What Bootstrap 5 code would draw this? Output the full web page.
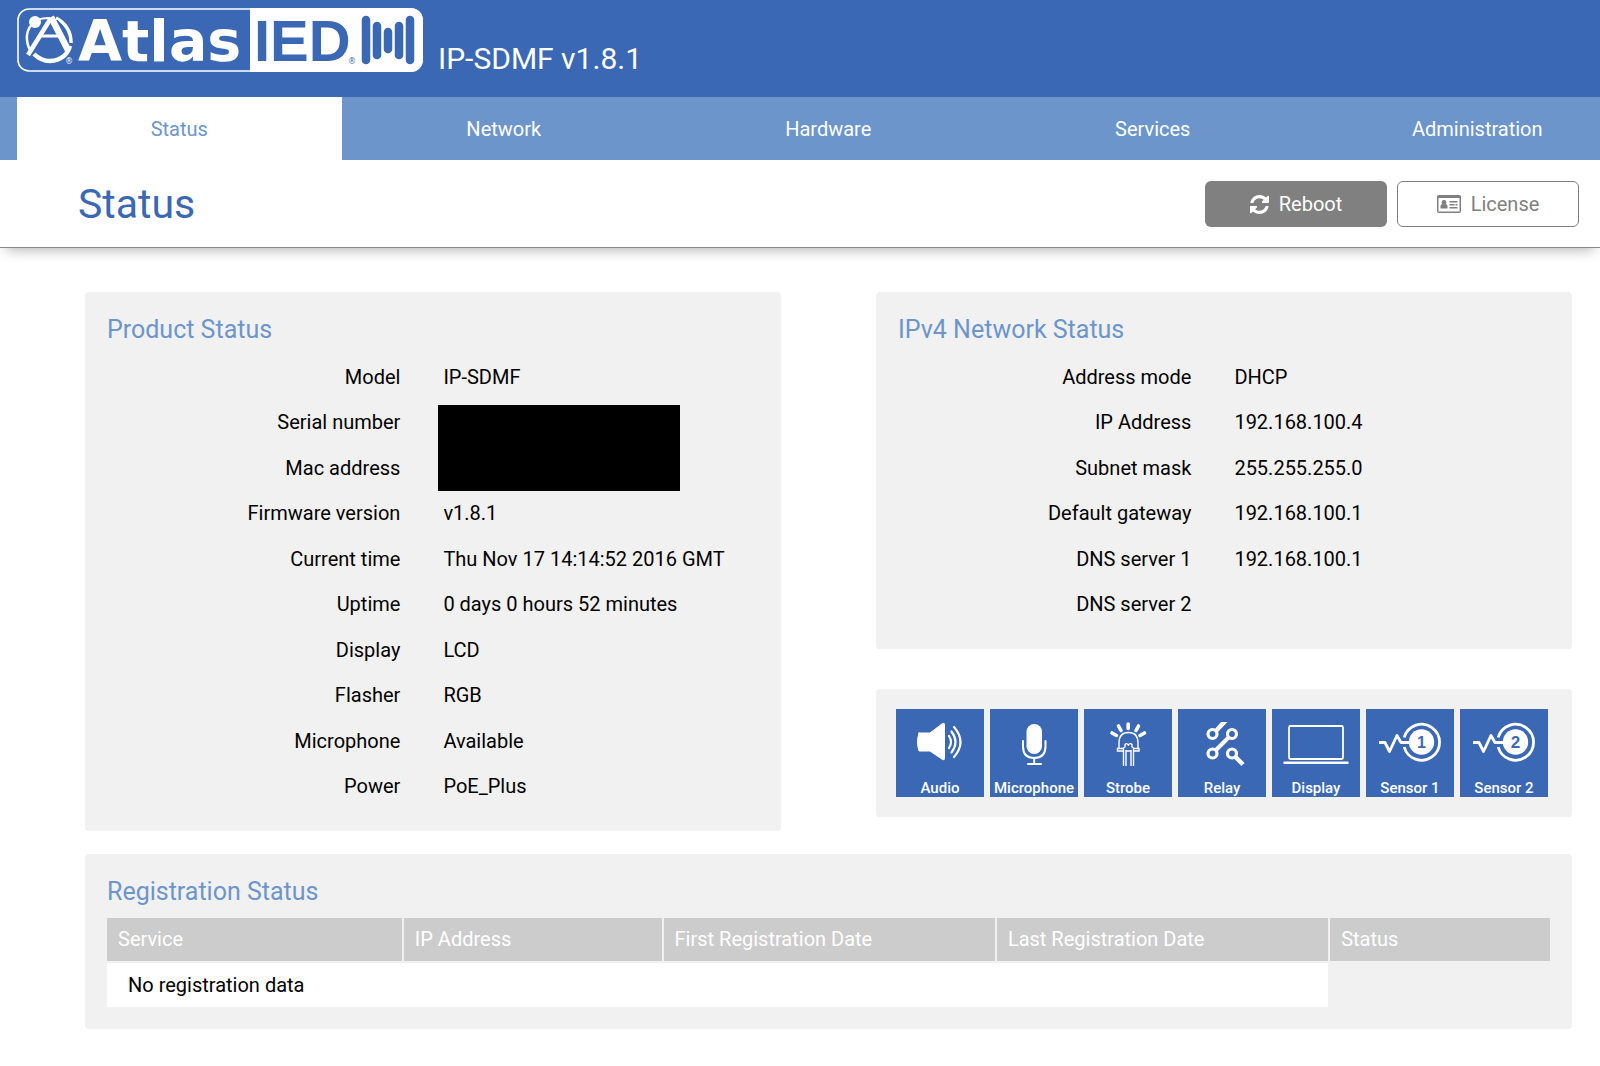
<!DOCTYPE html>
<html lang="en">
<head>
<meta charset="utf-8">
<meta name="viewport" content="width=device-width, initial-scale=1">
<title>IP-SDMF Status</title>
<link href="https://cdn.jsdelivr.net/npm/bootstrap@5.3.0/dist/css/bootstrap.min.css" rel="stylesheet">
<style>
:root { --brand: #3a68b5; --brand-light: #6c95cb; --panel: #f1f1f1; --grey: #808080; }
body { font-family: Roboto, "Liberation Sans", sans-serif; font-size: 20px; line-height: 30px; color: #000; background: #fff; }
.top-bar { background: var(--brand); color: #fff; padding: 8px 17px 20px; gap: 15px; }
.brand-logo { overflow: visible; }
.device-name { font-size: 30px; line-height: 36px; padding-top: 33px; }
.main-tabs { background: var(--brand-light); padding-left: 17px; overflow: hidden; }
.main-tabs .nav-link { flex: 0 0 20.5%; color: #fff; text-align: center; padding: 17px 0 16px; border-radius: 0; }
.main-tabs .nav-link.active { background: #fff; color: var(--brand-light); }
.title-bar { padding: 21px 21px 20px 78px; border-bottom: 1px solid #888; box-shadow: 0 8px 12px -6px rgba(0,0,0,.3); }
.title-bar h1 { font-size: 41px; line-height: 46px; font-weight: 400; color: var(--brand); }
.title-actions { gap: 10px; }
.title-btn { width: 182px; height: 46px; border-radius: 6px; font-size: 20px; line-height: 30px; gap: 10px; padding: 0; }
.btn-reboot, .btn-reboot:hover { background: var(--grey); color: #fff; }
.btn-license, .btn-license:hover { background: #fff; border-color: var(--grey); color: var(--grey); }
main { padding: 44px 28px 38px 85px; }
.status-row { --bs-gutter-x: 95px; }
.panel { background: var(--panel); border-radius: 4px; padding: 23px 22px 22px; }
.panel h2 { font-size: 25px; line-height: 30px; font-weight: 400; color: var(--brand-light); margin: 0 0 9px; }
.facts { display: grid; grid-template-columns: 45% 1fr; column-gap: 43px; grid-auto-rows: 1fr; align-items: center; margin: 0; }
.facts dt { grid-column: 1; text-align: right; font-weight: 400; }
.facts dd { grid-column: 2; margin: 0; white-space: nowrap; }
.facts-product { height: 455px; }
.facts-network { height: 273px; }
.facts .masked { grid-row-end: span 2; align-self: end; width: 242px; height: 86px; margin-left: -5px; background: #000; }
.tile-panel { margin-top: 40px; padding: 20px; }
.tiles { gap: 6px; }
.tile { width: 88px; height: 88px; background: var(--brand); color: #fff; font-size: 15px; font-weight: 500; line-height: 18px; border: 0; padding: 0; }
.tile svg { display: block; width: 88px; height: 70px; }
.reg-panel { margin-top: 23px; }
.reg-table { table-layout: fixed; margin: 11px 0 0; }
.reg-table th { background: #ccc; color: #fff; font-weight: 400; padding: 6px 11px 7px; border: solid var(--panel); border-width: 0 2px 2px 0; }
.reg-table th:last-child { border-right-width: 0; }
.reg-table td { background: #fff; color: #000; padding: 7px 21px 7px; border: solid var(--panel); border-width: 0 2px 0 0; }
.reg-table .blank { background: none; border: 0; }
.c-service { width: 20.5%; } .c-ip { width: 18%; } .c-date { width: 23.1%; }
</style>
</head>
<body>
<header class="top-bar d-flex align-items-start">
  <svg class="brand-logo" width="406" height="64" viewBox="17 8 406 64" role="img" aria-label="Atlas IED">
    <rect x="18" y="9" width="404" height="62" rx="11" fill="none" stroke="#fff" stroke-width="1.6"/>
    <path d="M250 8h161a12 12 0 0 1 12 12v40a12 12 0 0 1-12 12H250z" fill="#fff"/>
    <g fill="none" stroke="#fff">
      <path d="M32 24Q26 31 27 40Q28 48 31 51" stroke-width="2.500"/>
      <path d="M38 20Q42 18 49 18" stroke-width="2"/>
      <path d="M34 54Q41 61 50 61Q66 60 70 46" stroke-width="4.500"/>
      <path d="M56 18Q71 26 71 43" stroke-width="3.500"/>
      <path d="M28 55L51 18" stroke-width="4.500"/>
      <path d="M51 17L68 50" stroke-width="6.500"/>
      <path d="M39 36H61" stroke-width="3"/>
    </g>
    <path d="M57 20Q67 29 69 43" fill="none" stroke="#3a68b5" stroke-width="1"/>
    <circle cx="35" cy="22" r="6" fill="#fff"/>
    <g font-family="'DejaVu Sans', sans-serif" font-weight="700">
      <text x="78" y="61" font-size="57" fill="#fff">Atlas</text>
      <text x="65" y="64" font-size="8" font-weight="400" fill="#fff">®</text>
      <text x="348" y="64" font-size="8" font-weight="400" fill="#3a68b5">®</text>
    </g>
    <text x="254" y="61" font-family="'Liberation Sans', Arial, sans-serif" font-weight="700" font-size="58" fill="#3a68b5">IED</text>
    <g stroke="#3a68b5" stroke-width="8.500" stroke-linecap="round">
      <path d="M366 20V60M377 26V55M388 32V49M399 26V55M410 20V60"/>
    </g>
  </svg>
  <div class="device-name">IP-SDMF v1.8.1</div>
</header>

<nav class="main-tabs nav flex-nowrap" aria-label="Main">
  <a class="nav-link active" aria-current="page" href="#">Status</a>
  <a class="nav-link" href="#">Network</a>
  <a class="nav-link" href="#">Hardware</a>
  <a class="nav-link" href="#">Services</a>
  <a class="nav-link" href="#">Administration</a>
</nav>

<div class="title-bar d-flex align-items-center justify-content-between">
  <h1 class="m-0">Status</h1>
  <div class="title-actions d-flex">
    <button type="button" class="btn btn-reboot title-btn d-inline-flex align-items-center justify-content-center">
      <svg width="19" height="19" viewBox="0 0 1536 1536" fill="currentColor" aria-hidden="true"><path d="M1511 928q0 5-1 7-64 268-268 434.500T764 1536q-146 0-282.500-55T238 1324l-129 129q-19 19-45 19t-45-19-19-45V960q0-26 19-45t45-19h448q26 0 45 19t19 45-19 45l-137 137q71 66 161 102t187 36q134 0 250-65t186-179q11-17 53-117 8-23 30-23h192q13 0 22.500 9.500t9.500 22.500zm25-800v448q0 26-19 45t-45 19h-448q-26 0-45-19t-19-45 19-45l138-138Q969 256 768 256q-134 0-250 65T332 500q-11 17-53 117-8 23-30 23H50q-13 0-22.500-9.500T18 608v-7q65-268 270-434.500T768 0q146 0 284 55.500T1297 212l130-129q19-19 45-19t45 19 19 45z"/></svg>
      Reboot
    </button>
    <button type="button" class="btn btn-license title-btn d-inline-flex align-items-center justify-content-center">
      <svg width="24" height="18" viewBox="0 0 24 18" fill="currentColor" aria-hidden="true"><path fill-rule="evenodd" d="M2 0h20a2 2 0 0 1 2 2v14a2 2 0 0 1-2 2H2a2 2 0 0 1-2-2V2a2 2 0 0 1 2-2zM1.500 3v13q0 .5.5.5h20q.5 0 .5-.5V3z"/><circle cx="7" cy="7.500" r="2.400"/><path d="M3.500 13.500q-.5-4.500 2-4.500 1.500 1 3 0 2.500 0 2 4.500zM12.500 6h8v1.500h-8zM12.500 9h5v1.400h-5zM18.500 9h2v1.400h-2zM12.500 12h8v1.500h-8z"/></svg>
      License
    </button>
  </div>
</div>

<main>
  <div class="row status-row">
    <div class="col-6">
      <section class="panel">
        <h2>Product Status</h2>
        <dl class="facts facts-product">
          <dt>Model</dt><dd>IP-SDMF</dd>
          <dt>Serial number</dt><dd class="masked"></dd>
          <dt>Mac address</dt>
          <dt>Firmware version</dt><dd>v1.8.1</dd>
          <dt>Current time</dt><dd>Thu Nov 17 14:14:52 2016 GMT</dd>
          <dt>Uptime</dt><dd>0 days 0 hours 52 minutes</dd>
          <dt>Display</dt><dd>LCD</dd>
          <dt>Flasher</dt><dd>RGB</dd>
          <dt>Microphone</dt><dd>Available</dd>
          <dt>Power</dt><dd>PoE_Plus</dd>
        </dl>
      </section>
    </div>
    <div class="col-6">
      <section class="panel">
        <h2>IPv4 Network Status</h2>
        <dl class="facts facts-network">
          <dt>Address mode</dt><dd>DHCP</dd>
          <dt>IP Address</dt><dd>192.168.100.4</dd>
          <dt>Subnet mask</dt><dd>255.255.255.0</dd>
          <dt>Default gateway</dt><dd>192.168.100.1</dd>
          <dt>DNS server 1</dt><dd>192.168.100.1</dd>
          <dt>DNS server 2</dt><dd></dd>
        </dl>
      </section>
      <section class="panel tile-panel">
        <div class="tiles d-flex">
          <button type="button" class="tile">
            <svg viewBox="0 0 88 70" fill="none" stroke="#fff" stroke-width="2.200" stroke-linecap="round" aria-hidden="true"><path d="M23 24h11L46.500 14.500q2-1 2 1v34q0 2-2 1L34 42H23q-1.500-4.500-1.500-9T23 24z" fill="#fff" stroke-width="1"/><path d="M53 27q4 6 0 12M55.500 22.500q8 10.500 0 21M58 18q13 15 0 30"/></svg>
            Audio
          </button>
          <button type="button" class="tile">
            <svg viewBox="0 0 88 70" fill="none" stroke="#fff" stroke-width="2" stroke-linecap="round" aria-hidden="true"><rect x="36.500" y="15" width="15.500" height="30" rx="7.700" fill="#fff" stroke="none"/><path d="M33 32v5.500q0 11.500 11.200 11.500T55.500 37.500V32M44.200 49v5.500M38 55h13"/></svg>
            Microphone
          </button>
          <button type="button" class="tile">
            <svg viewBox="0 0 88 70" fill="none" stroke="#fff" stroke-width="1.400" aria-hidden="true"><path d="M35 39V34Q35 23.500 44.500 23.500T54 34v5M39 42H33.500V39.500H39M50 39.500h5V42h-5M42 42h5M39.500 57V39l1.500-1v-2.500q1.500-2 3.300.5 2-2.500 3.700-.5V38l1.500 1v18M42 57V41M47 57V41"/><path d="M28 24l4.500 2.500M34.500 17l2.500 4.500M44.200 15v4.500M54.500 17L52 21.500M60.500 24L56 26.500" stroke-width="3.600" stroke-linecap="round"/></svg>
            Strobe
          </button>
          <button type="button" class="tile">
            <svg viewBox="0 0 88 70" fill="none" stroke="#fff" stroke-width="3.200" aria-hidden="true"><circle cx="34.500" cy="25" r="4.500"/><circle cx="54" cy="25" r="4.500"/><circle cx="34.500" cy="44.500" r="4.500"/><circle cx="54" cy="44.500" r="4.500"/><path d="M38 41L50.500 28.500" stroke-width="4"/><path d="M57.500 48L65 55.500" stroke-width="4.500"/><path d="M36 21L43 13H49.500L39 24z" fill="#fff" stroke="none"/></svg>
            Relay
          </button>
          <button type="button" class="tile">
            <svg viewBox="0 0 88 70" fill="none" stroke="#fff" stroke-width="1.800" aria-hidden="true"><rect x="17" y="17" width="54" height="33" rx="1.500"/><path d="M12.500 53.700H75.500" stroke-width="2.400" stroke-linecap="round"/></svg>
            Display
          </button>
          <button type="button" class="tile">
            <svg viewBox="0 0 88 70" fill="none" stroke="#fff" stroke-width="2.800" stroke-linejoin="round" aria-hidden="true"><circle cx="55.500" cy="33" r="12.700" fill="#fff" stroke="none"/><path d="M13 33.500h6L23.500 42.500 31 26.500 35 33.500H44"/><path d="M38.200 28.500A18 18 0 1 1 38.200 38"/><text x="55.500" y="38.500" text-anchor="middle" font-family="'Liberation Sans', sans-serif" font-weight="700" font-size="16" fill="#3a68b5" stroke="none">1</text></svg>
            Sensor 1
          </button>
          <button type="button" class="tile">
            <svg viewBox="0 0 88 70" fill="none" stroke="#fff" stroke-width="2.800" stroke-linejoin="round" aria-hidden="true"><circle cx="55.500" cy="33" r="12.700" fill="#fff" stroke="none"/><path d="M13 33.500h6L23.500 42.500 31 26.500 35 33.500H44"/><path d="M38.200 28.500A18 18 0 1 1 38.200 38"/><text x="55.500" y="39" text-anchor="middle" font-family="'Liberation Sans', sans-serif" font-weight="700" font-size="17" fill="#3a68b5" stroke="none">2</text></svg>
            Sensor 2
          </button>
        </div>
      </section>
    </div>
  </div>

  <section class="panel reg-panel">
    <h2>Registration Status</h2>
    <table class="table reg-table">
      <thead>
        <tr>
          <th scope="col" class="c-service">Service</th>
          <th scope="col" class="c-ip">IP Address</th>
          <th scope="col" class="c-date">First Registration Date</th>
          <th scope="col" class="c-date">Last Registration Date</th>
          <th scope="col">Status</th>
        </tr>
      </thead>
      <tbody>
        <tr><td colspan="4">No registration data</td><td class="blank"></td></tr>
      </tbody>
    </table>
  </section>
</main>
<script src="https://cdn.jsdelivr.net/npm/bootstrap@5.3.0/dist/js/bootstrap.bundle.min.js"></script>
</body>
</html>
